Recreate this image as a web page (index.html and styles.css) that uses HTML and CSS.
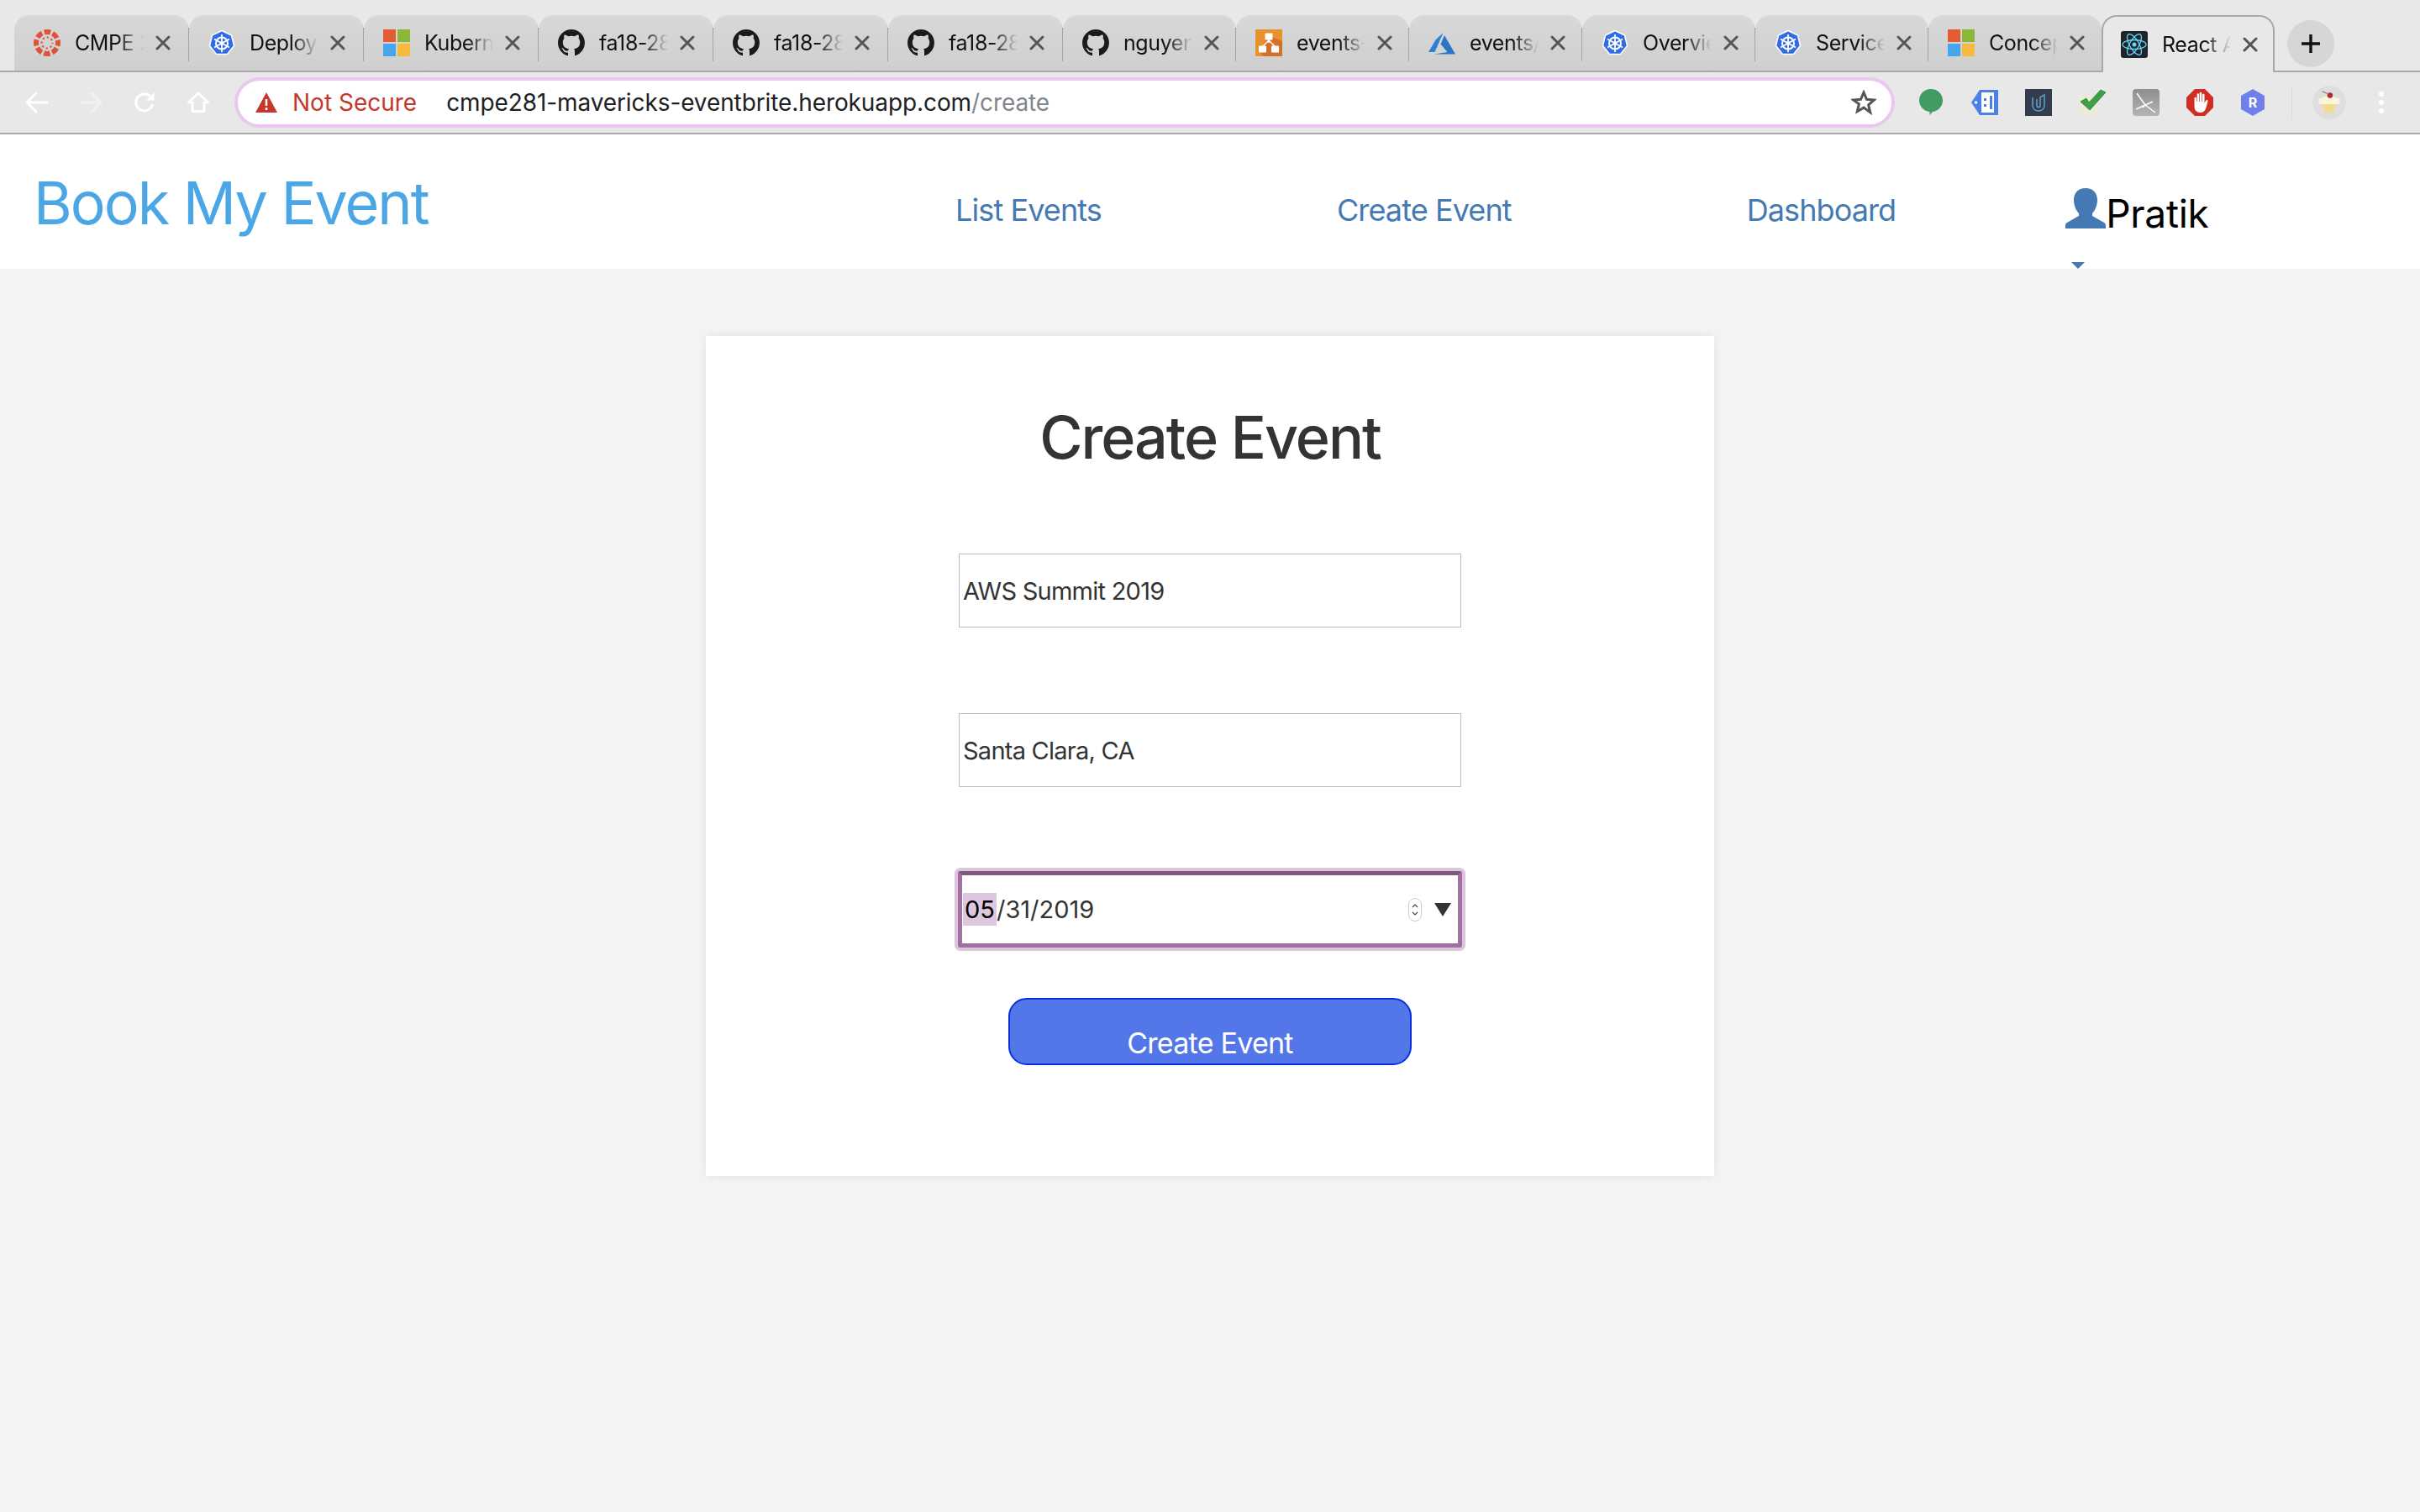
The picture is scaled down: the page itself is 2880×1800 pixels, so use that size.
FILE: index.html
```html
<!DOCTYPE html>
<html>
<head>
	<title>React App</title>
	<link rel="stylesheet" href="styles.css">
</head>
<body>

	<!-- icons used more than once -->
	<svg class="defs">
		<symbol id="gh" viewBox="0 0 16 16">
			<path d="M8 0C3.58 0 0 3.58 0 8c0 3.54 2.29 6.53 5.47 7.59.4.07.55-.17.55-.38 0-.19-.01-.82-.01-1.49-2.01.37-2.53-.49-2.69-.94-.09-.23-.48-.94-.82-1.13-.28-.15-.68-.52-.01-.53.63-.01 1.08.58 1.23.82.72 1.21 1.87.87 2.33.66.07-.52.28-.87.51-1.07-1.78-.2-3.64-.89-3.64-3.95 0-.87.31-1.59.82-2.15-.08-.2-.36-1.02.08-2.12 0 0 .67-.21 2.2.82.64-.18 1.32-.27 2-.27.68 0 1.36.09 2 .27 1.53-1.04 2.2-.82 2.2-.82.44 1.1.16 1.92.08 2.12.51.56.82 1.27.82 2.15 0 3.07-1.87 3.75-3.65 3.95.29.25.54.73.54 1.48 0 1.07-.01 1.93-.01 2.2 0 .21.15.46.55.38A8.013 8.013 0 0016 8c0-4.42-3.58-8-8-8z" fill="#1b1b1b"/>
		</symbol>
		<symbol id="k8s" viewBox="0 0 32 32">
			<path d="M16 1.500l11.500 5.500 3 12.500-8 10h-13l-8-10 3-12.500z" fill="#326ce5" stroke="#fff" stroke-width="1.500" stroke-linejoin="round"/>
			<g fill="none" stroke="#fff">
				<circle cx="16" cy="16.500" r="7" stroke-width="2"/>
				<path d="M16 6v21M7 11.500l18 10M25 11.500l-18 10" stroke-width="1.800"/>
			</g>
			<circle cx="16" cy="16.500" r="2.200" fill="#fff"/>
		</symbol>
		<symbol id="ms" viewBox="0 0 32 32">
			<rect width="15" height="15" fill="#e55b33"/>
			<rect x="17" width="15" height="15" fill="#8ab836"/>
			<rect y="17" width="15" height="15" fill="#45a5ee"/>
			<rect x="17" y="17" width="15" height="15" fill="#f6bb3c"/>
		</symbol>
		<symbol id="close" viewBox="0 0 18 18">
			<path d="M2 2l14 14M16 2L2 16" stroke="#555" stroke-width="3" stroke-linecap="round" fill="none"/>
		</symbol>
	</svg>

	<div class="tabstrip">
		<div class="tab">
			<svg class="favicon" viewBox="0 0 32 32">
				<circle cx="16" cy="16" r="13" fill="none" stroke="#df5138" stroke-width="6" stroke-dasharray="7.500 2.710" stroke-dashoffset="3.750"/>
				<circle cx="16" cy="16" r="6.500" fill="none" stroke="#df5138" stroke-width="2.200" stroke-dasharray="2.200 2.900" stroke-dashoffset="1.100"/>
			</svg>
			<span class="tab-title">CMPE 2</span>
			<svg class="tab-close"><use href="#close"/></svg>
		</div>
		<div class="tab">
			<svg class="favicon"><use href="#k8s"/></svg>
			<span class="tab-title">Deploy</span>
			<svg class="tab-close"><use href="#close"/></svg>
		</div>
		<div class="tab">
			<svg class="favicon"><use href="#ms"/></svg>
			<span class="tab-title">Kubern</span>
			<svg class="tab-close"><use href="#close"/></svg>
		</div>
		<div class="tab">
			<svg class="favicon"><use href="#gh"/></svg>
			<span class="tab-title">fa18-28</span>
			<svg class="tab-close"><use href="#close"/></svg>
		</div>
		<div class="tab">
			<svg class="favicon"><use href="#gh"/></svg>
			<span class="tab-title">fa18-28</span>
			<svg class="tab-close"><use href="#close"/></svg>
		</div>
		<div class="tab">
			<svg class="favicon"><use href="#gh"/></svg>
			<span class="tab-title">fa18-28</span>
			<svg class="tab-close"><use href="#close"/></svg>
		</div>
		<div class="tab">
			<svg class="favicon"><use href="#gh"/></svg>
			<span class="tab-title">nguyen</span>
			<svg class="tab-close"><use href="#close"/></svg>
		</div>
		<div class="tab">
			<svg class="favicon" viewBox="0 0 32 32">
				<rect width="32" height="32" rx="1" fill="#e8912f"/>
				<path d="M32 14v17a1 1 0 0 1-1 1H10L4 26l8-12 4-8 6 4z" fill="#d2702c"/>
				<path d="M16 9v7M16 13L8 21M16 13l8 8" stroke="#fff" stroke-width="1.600" fill="none"/>
				<rect x="11.500" y="4.500" width="9" height="8" rx="1" fill="#fff"/>
				<rect x="4" y="19.500" width="9" height="8" rx="1" fill="#fff"/>
				<rect x="19" y="19.500" width="9" height="8" rx="1" fill="#fff"/>
			</svg>
			<span class="tab-title">events-</span>
			<svg class="tab-close"><use href="#close"/></svg>
		</div>
		<div class="tab">
			<svg class="favicon" viewBox="0 0 32 32">
				<path d="M17.500 4L8.500 12.500 0 27h7.500z" fill="#2f7fd0"/>
				<path d="M19 7l-4.500 10.500 8 9.500L7 29.500h25z" fill="#2a76c6"/>
			</svg>
			<span class="tab-title">events/</span>
			<svg class="tab-close"><use href="#close"/></svg>
		</div>
		<div class="tab">
			<svg class="favicon"><use href="#k8s"/></svg>
			<span class="tab-title">Overvie</span>
			<svg class="tab-close"><use href="#close"/></svg>
		</div>
		<div class="tab">
			<svg class="favicon"><use href="#k8s"/></svg>
			<span class="tab-title">Service</span>
			<svg class="tab-close"><use href="#close"/></svg>
		</div>
		<div class="tab">
			<svg class="favicon"><use href="#ms"/></svg>
			<span class="tab-title">Concep</span>
			<svg class="tab-close"><use href="#close"/></svg>
		</div>
		<div class="tab active">
			<svg class="favicon" viewBox="0 0 32 32">
				<rect width="32" height="32" rx="3" fill="#20232a"/>
				<g fill="none" stroke="#61dafb" stroke-width="1.300">
					<ellipse cx="16" cy="16" rx="14" ry="5.500"/>
					<ellipse cx="16" cy="16" rx="14" ry="5.500" transform="rotate(60 16 16)"/>
					<ellipse cx="16" cy="16" rx="14" ry="5.500" transform="rotate(120 16 16)"/>
				</g>
				<circle cx="16" cy="16" r="2.500" fill="#61dafb"/>
			</svg>
			<span class="tab-title">React A</span>
			<svg class="tab-close"><use href="#close"/></svg>
		</div>
		<div class="new-tab">
			<svg width="24" height="24" viewBox="0 0 24 24"><path d="M12 1v22M1 12h22" stroke="#111" stroke-width="3.400"/></svg>
		</div>
	</div>

	<div class="toolbar">
		<div class="nav-btns">
			<svg viewBox="0 0 28 28"><path d="M26 14H3M13 3L2 14l11 11" stroke="#fff" stroke-width="3" stroke-linecap="round" stroke-linejoin="round" fill="none"/></svg>
			<svg class="dim" viewBox="0 0 28 28"><path d="M2 14h23M15 3l11 11-11 11" stroke="#fff" stroke-width="3" stroke-linecap="round" stroke-linejoin="round" fill="none"/></svg>
			<svg viewBox="0 0 28 28">
				<path d="M23.500 16a10 10 0 1 1-3-9.500" stroke="#fff" stroke-width="3" fill="none"/>
				<path d="M25.500 2v9.500H16z" fill="#fff"/>
			</svg>
			<svg viewBox="0 0 28 28"><path d="M14 3L2.500 14H7v10.500h14V14h4.500z" stroke="#fff" stroke-width="3" stroke-linejoin="round" fill="none"/></svg>
		</div>
		<div class="omnibox">
			<svg class="warn" viewBox="0 0 26 24">
				<path d="M13 0l13 24H0z" fill="#c5372c"/>
				<path d="M11.700 8h2.600v8h-2.600zM11.700 18h2.600v3h-2.600z" fill="#fff"/>
			</svg>
			<span class="not-secure">Not Secure</span>
			<span class="url">cmpe281-mavericks-eventbrite.herokuapp.com<span class="url-path">/create</span></span>
			<svg class="star" viewBox="0 0 30 30"><path d="M15 3l3.500 8.300 9 .700-6.900 5.900 2.100 8.800L15 21.100l-7.700 4.600 2.100-8.800L2.500 12l9-.700z" fill="none" stroke="#555" stroke-width="3"/></svg>
		</div>
		<div class="extensions">
			<svg viewBox="0 0 32 32"><path d="M16 0c8 0 14 6 14 13.500 0 7-5 12.500-12 13.500l-3.500 4v-4C7.500 26.500 2 20.500 2 13.500 2 6 8 0 16 0z" fill="#429b63"/></svg>
			<svg viewBox="0 0 32 32">
				<path d="M10 1h22v30H10L0 16z" fill="#4a80e8"/>
				<rect x="12" y="4" width="15" height="24" fill="#fff"/>
				<circle cx="5.500" cy="16" r="1.800" fill="#fff"/>
				<path d="M15 11h3v3h-3zM15 18h3v3h-3zM22 8h3v16h-3z" fill="#4a80e8"/>
			</svg>
			<svg viewBox="0 0 32 32">
				<rect width="32" height="32" fill="#343d4d"/>
				<path d="M9 10v9.500c0 4 3 6.500 7 6.500s7-2.500 7-6.500V7l-5 3v10c0 1-.8 1.500-2 1.500s-2-.5-2-1.500v-8" stroke="#5fa9d6" stroke-width="1.400" fill="none"/>
			</svg>
			<svg viewBox="0 0 32 32">
				<rect x="0" y="8" width="22" height="24" fill="#ecebd9"/>
				<path d="M2 15l7-4 3 5L26 1l6 3-19 21z" fill="#3f9f45" stroke="#2c7f35" stroke-width=".8"/>
			</svg>
			<svg viewBox="0 0 32 32">
				<defs><linearGradient id="glider" x1="0" y1="0" x2="0" y2="1"><stop offset="0" stop-color="#8e8e8e"/><stop offset="1" stop-color="#b4b4b4"/></linearGradient></defs>
				<rect width="32" height="32" rx="4" fill="url(#glider)"/>
				<path d="M5 5l10 14 12 9M4 24l20-9M15 19l-3 3" stroke="#fff" stroke-width="1.500" fill="none"/>
			</svg>
			<svg viewBox="0 0 32 32">
				<path d="M10 0h12l10 10v12L22 32H10L0 22V10z" fill="#d22d23"/>
				<path d="M9.500 11c0-1.600 2.500-1.600 2.500 0v4h.6V6.500c0-1.600 2.500-1.600 2.500 0V15h.7V5c0-1.600 2.500-1.600 2.500 0v10h.7V7c0-1.600 2.500-1.600 2.500 0v10l1.500-3c1-1.800 3-1 2.500.6L23.500 22c-1 3.500-3 6-7 6-4.500 0-7-3-7-7z" fill="#fff"/>
			</svg>
			<svg viewBox="0 0 32 32">
				<path d="M15 0l14 8v16l-14 8-14-8V8z" fill="#6f80ea"/>
				<text x="15" y="22" class="ext-r">R</text>
			</svg>
			<span class="ext-sep"></span>
			<span class="avatar">
				<svg viewBox="0 0 32 32">
					<path d="M7 16h18l-3 13H10z" fill="#f4dc8c"/>
					<path d="M2 14c0-3 3-4 5-4 2-3 14-3 17 0 3 0 6 1 6 4s-2 4-5 4H7c-3 0-5-1-5-4z" fill="#fbf3dc"/>
					<circle cx="17" cy="7" r="3.500" fill="#b02a30"/>
					<path d="M15 5L7 2" stroke="#8a7f70" stroke-width="1.200"/>
				</svg>
			</span>
			<span class="menu-dots"><i></i><i></i><i></i></span>
		</div>
	</div>

	<nav class="navbar">
		<a class="brand" href="#">Book My Event</a>
		<ul class="nav-links">
			<li><a href="#">List Events</a></li>
			<li><a href="#">Create Event</a></li>
			<li><a href="#">Dashboard</a></li>
		</ul>
		<div class="user">
			<svg class="user-icon" viewBox="0 0 48 48"><path d="M24 0c9 0 14 6 14 14 0 7-3 13-6 16v3l14 8c2 1 2 2 2 7H0c0-5 0-6 2-7l14-8v-3c-3-3-6-9-6-16C10 6 15 0 24 0z"/></svg>
			<span>Pratik</span>
			<span class="caret"></span>
		</div>
	</nav>

	<main class="content">
		<form class="card">
			<h1>Create Event</h1>
			<input class="field" type="text" value="AWS Summit 2019">
			<input class="field" type="text" value="Santa Clara, CA">
			<div class="field date-field">
				<span class="date-value"><span class="date-sel">05</span>/31/2019</span>
				<span class="date-spin">
					<svg viewBox="0 0 16 28"><rect x=".5" y=".5" width="15" height="27" rx="7.500" fill="#fff" stroke="#ccc"/><path d="M5 11l3-3 3 3M5 17l3 3 3-3" fill="none" stroke="#444" stroke-width="1.200"/></svg>
				</span>
				<span class="date-arrow"></span>
			</div>
			<button class="submit" type="button">Create Event</button>
		</form>
	</main>

</body>
</html>
```

FILE: styles.css
```css
*, html, body{
	margin: 0;
	padding: 0;
	box-sizing: border-box;
}
html, body{
	height: 100%;
}
body{
	display: flex;
	flex-direction: column;
	background: #f4f4f4;
	font-family: Inter, "Liberation Sans", sans-serif;
}
.defs{
	display: none;
}

/* browser chrome */
.tabstrip{
	display: flex;
	height: 86px;
	padding: 18px 0 0 17px;
	background: #e8e8e8;
	border-bottom: 2px solid #a8a8a8;
}
.tab{
	display: flex;
	align-items: center;
	width: 206px;
	height: 66px;
	padding: 0 0 0 23px;
	background: linear-gradient(#d8d8d8, #cfcfcf);
	border-radius: 18px 18px 0 0;
	position: relative;
}
.tab:nth-child(-n+6){
	width: 208px;
}
.tab:not(.active):not(:nth-child(12))::after{
	content: "";
	position: absolute;
	right: -1px;
	top: 15px;
	height: 40px;
	border-right: 2px solid #a4a4a4;
}
.tab.active{
	width: 206px;
	height: 68px;
	padding-left: 21px;
	background: #e8e8e8;
	border: 2px solid #a8a8a8;
	border-bottom: none;
}
.favicon{
	flex: none;
	width: 32px;
	height: 32px;
}
.tab-title{
	width: 82px;
	margin: 0 0 0 17px;
	overflow: hidden;
	white-space: nowrap;
	font-size: 25px;
	line-height: 32px;
	letter-spacing: -.4px;
	color: #111;
	-webkit-mask-image: linear-gradient(90deg, #000 62%, transparent 100%);
	mask-image: linear-gradient(90deg, #000 62%, transparent 100%);
}
.tab-close{
	flex: none;
	width: 18px;
	height: 18px;
	margin-left: 14px;
}
.new-tab{
	display: flex;
	align-items: center;
	justify-content: center;
	width: 56px;
	height: 56px;
	margin: 6px 0 0 15px;
	background: #d6d6d6;
	border-radius: 50%;
}
.toolbar{
	display: flex;
	align-items: center;
	height: 74px;
	background: #e8e8e8;
	border-bottom: 2px solid #aaa;
}
.nav-btns{
	display: flex;
	gap: 36px;
	width: 279px;
	padding-left: 30px;
}
.nav-btns svg{
	width: 28px;
	height: 28px;
}
.nav-btns .dim{
	opacity: .4;
}
.omnibox{
	display: flex;
	align-items: center;
	width: 1976px;
	height: 60px;
	padding: 0 18px 0 21px;
	background: #fff;
	border: 4px solid #e8c8ee;
	border-radius: 30px;
	font-size: 28px;
}
.warn{
	width: 26px;
	height: 24px;
}
.not-secure{
	margin-left: 18px;
	color: #c5372c;
}
.url{
	flex: 1;
	margin-left: 35px;
	letter-spacing: -.1px;
	color: #202124;
}
.url-path{
	color: #80868b;
}
.star{
	width: 30px;
	height: 30px;
}
.extensions{
	display: flex;
	align-items: center;
	gap: 32px;
	padding-left: 27px;
}
.extensions > svg{
	width: 32px;
	height: 32px;
}
.ext-r{
	font: bold 16px Inter, sans-serif;
	fill: #fff;
	text-anchor: middle;
}
.ext-sep{
	width: 1px;
	height: 40px;
	margin-left: -3px;
	background: #dcdcdc;
}
.avatar{
	display: flex;
	align-items: center;
	justify-content: center;
	width: 40px;
	height: 40px;
	margin-left: -8px;
	background: #dedede;
	border-radius: 50%;
}
.avatar svg{
	width: 30px;
	height: 30px;
}
.menu-dots{
	display: flex;
	flex-direction: column;
	gap: 4px;
	margin-left: 7px;
}
.menu-dots i{
	width: 6px;
	height: 6px;
	background: #fff;
	border-radius: 50%;
}

/* page */
.navbar{
	display: flex;
	align-items: flex-start;
	height: 160px;
	background: #fff;
	flex: none;
}
.brand{
	width: 1137px;
	padding: 37px 0 0 40px;
	font-size: 70px;
	line-height: 90px;
	color: #4ba6e6;
	text-decoration: none;
	letter-spacing: -2px;
}
.nav-links{
	display: flex;
	gap: 280px;
	padding-top: 68px;
	list-style: none;
}
.nav-links a{
	font-size: 36px;
	line-height: 44px;
	letter-spacing: -.9px;
	color: #4479b3;
	text-decoration: none;
}
.user{
	display: flex;
	align-items: flex-end;
	margin-left: 202px;
	padding-top: 64px;
	height: 160px;
	font-size: 46px;
	color: #000;
	position: relative;
}
.user span:not(.caret){
	line-height: 56px;
	margin-bottom: 38px;
	letter-spacing: -.3px;
}
.user-icon{
	width: 48px;
	height: 48px;
	margin-bottom: 48px;
	fill: #4479b3;
}
.caret{
	position: absolute;
	left: 7px;
	bottom: 0;
	border: 8px solid transparent;
	border-top-color: #4479b3;
	border-bottom: none;
}
.content{
	display: flex;
	justify-content: center;
	padding-top: 80px;
}
.card{
	display: flex;
	flex-direction: column;
	align-items: center;
	width: 1200px;
	height: 1000px;
	padding-top: 76px;
	background: #fff;
	box-shadow: 0 0 12px rgba(0,0,0,.08);
}
.card h1{
	height: 103px;
	font-size: 70px;
	line-height: 90px;
	font-weight: 500;
	color: #333;
	letter-spacing: -2px;
}
.field{
	display: block;
	width: 598px;
	height: 88px;
	margin-top: 80px;
	padding: 0 4px;
	background: #fff;
	border: 1px solid #bdbdbd;
	font-family: Inter, "Liberation Sans", sans-serif;
	font-size: 29px;
	letter-spacing: -.75px;
	color: #333;
}
.field + .field{
	margin-top: 102px;
}
.field + .date-field{
	display: flex;
	align-items: center;
	width: 600px;
	height: 91px;
	margin-top: 100px;
	padding: 0 8px 0 1px;
	letter-spacing: 0;
	border: 5px solid #a070a2;
	border-top-color: #80587f;
	border-radius: 3px;
	box-shadow: 0 0 0 4px #dcc4da;
}
.date-value{
	flex: 1;
}
.date-sel{
	background: #dcc8de;
	color: #000;
	padding: 2px 2px;
}
.date-spin svg{
	display: block;
	width: 16px;
	height: 28px;
}
.date-arrow{
	margin-left: 15px;
	border: 10px solid transparent;
	border-top: 16px solid #333;
	border-bottom: none;
}
.submit{
	width: 480px;
	height: 80px;
	margin-top: 60px;
	padding-top: 26px;
	background: #5377e9;
	border: 2px solid #0a2fdc;
	border-radius: 22px;
	font-family: Inter, "Liberation Sans", sans-serif;
	font-size: 34px;
	letter-spacing: -.75px;
	color: #fff;
}
```
